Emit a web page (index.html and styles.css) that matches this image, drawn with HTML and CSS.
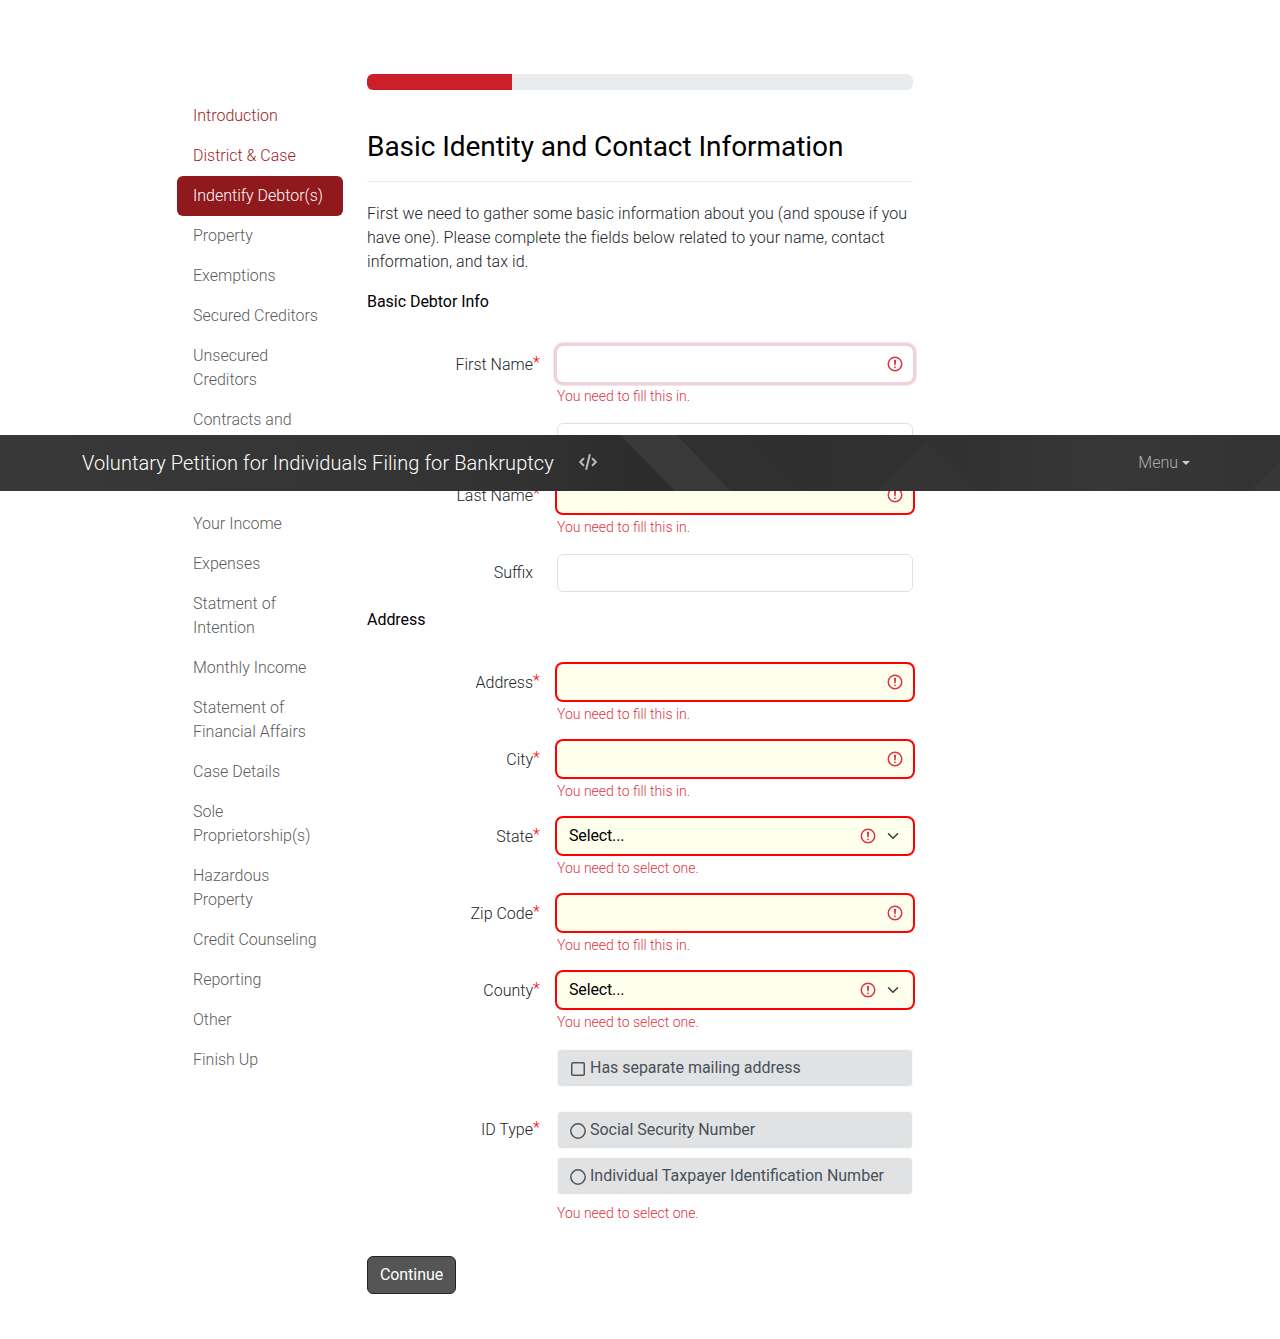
FILE: index.html
```html
<!DOCTYPE html>
<html lang="en">
<head>
<meta charset="utf-8">
<title>Voluntary Petition for Individuals Filing for Bankruptcy</title>
<link rel="stylesheet" href="styles.css">
</head>
<body>
<svg width="0" height="0" class="defs" aria-hidden="true">
  <symbol id="alert" viewBox="0 0 12 12"><g fill="none" stroke="#dc3545"><circle cx="6" cy="6" r="4.5"/><path stroke-linejoin="round" d="M5.8 3.6h.4L6 6.5z"/></g><circle cx="6" cy="8.2" r=".6" fill="#dc3545"/></symbol>
  <symbol id="chevron" viewBox="0 0 16 16"><path fill="none" stroke="#343a40" stroke-linecap="round" stroke-linejoin="round" stroke-width="2" d="m2 5 6 6 6-6"/></symbol>
</svg>

<header class="navbar">
  <svg class="navbar-art" viewBox="0 0 1280 56" preserveAspectRatio="none" aria-hidden="true">
    <defs>
      <linearGradient id="base" x1="0" x2="1" y1="0" y2="0">
        <stop offset="0" stop-color="#383838"/><stop offset=".3" stop-color="#353535"/><stop offset=".42" stop-color="#313131"/><stop offset=".5" stop-color="#2c2c2c"/><stop offset=".6" stop-color="#2f2f2f"/><stop offset=".75" stop-color="#313131"/><stop offset=".86" stop-color="#373737"/><stop offset="1" stop-color="#333"/>
      </linearGradient>
    </defs>
    <path fill="url(#base)" d="M0 0h1280v56H0z"/>
    <path fill="#393939" d="M620 0h57l54 56h-56z"/>
    <path fill="#303030" d="M677 0h70l50 56h-66z"/>
    <path fill="#343434" d="M878 56 926 7l50 49z"/>
    <path fill="#373737" d="M1248 56l32-30v30z"/>
  </svg>
  <div class="navbar-inner">
    <span class="brand">Voluntary Petition for Individuals Filing for Bankruptcy</span>
    <svg class="code" viewBox="0 0 18 16" aria-hidden="true"><path fill="none" stroke="currentColor" stroke-width="2" stroke-linecap="round" stroke-linejoin="round" d="M4.400 4.800 1.200 8l3.200 3.200M13.600 4.800 16.800 8l-3.200 3.200M10.700 1 7.300 15"/></svg>
    <a class="menu">Menu</a>
  </div>
</header>

<div class="page">
  <nav class="steps">
    <a class="done">Introduction</a>
    <a class="done">District &amp; Case</a>
    <a class="active">Indentify Debtor(s)</a>
    <a>Property</a>
    <a>Exemptions</a>
    <a>Secured Creditors</a>
    <a>Unsecured Creditors</a>
    <a>Contracts and Leases</a>
    <a>Codebtors</a>
    <a>Your Income</a>
    <a>Expenses</a>
    <a>Statment of Intention</a>
    <a>Monthly Income</a>
    <a>Statement of Financial Affairs</a>
    <a>Case Details</a>
    <a>Sole Proprietorship(s)</a>
    <a>Hazardous Property</a>
    <a>Credit Counseling</a>
    <a>Reporting</a>
    <a>Other</a>
    <a>Finish Up</a>
  </nav>
  <main>
    <div class="progress"><div class="progress-bar" style="width:26.5%"></div></div>
    <h1>Basic Identity and Contact Information</h1>
    <hr>
    <p>First we need to gather some basic information about you (and spouse if you have one). Please complete the fields below related to your name, contact information, and tax id.</p>
    <h2>Basic Debtor Info</h2>

    <div class="row">
      <label>First Name<sup>*</sup></label>
      <div><div class="field focus"><input type="text"><svg class="alert"><use href="#alert"/></svg></div><div class="error">You need to fill this in.</div></div>
    </div>
    <div class="row">
      <label>Middle Name</label>
      <div><div class="field plain"><input type="text"></div></div>
    </div>
    <div class="row">
      <label>Last Name<sup>*</sup></label>
      <div><div class="field invalid"><input type="text"><svg class="alert"><use href="#alert"/></svg></div><div class="error">You need to fill this in.</div></div>
    </div>
    <div class="row">
      <label>Suffix</label>
      <div><div class="field plain"><input type="text"></div></div>
    </div>

    <h2>Address</h2>

    <div class="row">
      <label>Address<sup>*</sup></label>
      <div><div class="field invalid"><input type="text"><svg class="alert"><use href="#alert"/></svg></div><div class="error">You need to fill this in.</div></div>
    </div>
    <div class="row">
      <label>City<sup>*</sup></label>
      <div><div class="field invalid"><input type="text"><svg class="alert"><use href="#alert"/></svg></div><div class="error">You need to fill this in.</div></div>
    </div>
    <div class="row">
      <label>State<sup>*</sup></label>
      <div><div class="field invalid"><select><option>Select...</option></select><svg class="alert"><use href="#alert"/></svg><svg class="chevron"><use href="#chevron"/></svg></div><div class="error">You need to select one.</div></div>
    </div>
    <div class="row">
      <label>Zip Code<sup>*</sup></label>
      <div><div class="field invalid"><input type="text"><svg class="alert"><use href="#alert"/></svg></div><div class="error">You need to fill this in.</div></div>
    </div>
    <div class="row">
      <label>County<sup>*</sup></label>
      <div><div class="field invalid"><select><option>Select...</option></select><svg class="alert"><use href="#alert"/></svg><svg class="chevron"><use href="#chevron"/></svg></div><div class="error">You need to select one.</div></div>
    </div>
    <div class="row mailing">
      <span></span>
      <div class="option"><svg viewBox="0 0 16 16"><rect x="1.750" y="1.750" width="12.500" height="12.500" rx="1" fill="none" stroke="#555" stroke-width="1.500"/></svg>Has separate mailing address</div>
    </div>
    <div class="row">
      <label>ID Type<sup>*</sup></label>
      <div class="options">
        <div class="option"><svg viewBox="0 0 16 16"><circle cx="8" cy="8" r="7.200" fill="none" stroke="#555" stroke-width="1.500"/></svg>Social Security Number</div>
        <div class="option"><svg viewBox="0 0 16 16"><circle cx="8" cy="8" r="7.200" fill="none" stroke="#555" stroke-width="1.500"/></svg>Individual Taxpayer Identification Number</div>
        <div class="error">You need to select one.</div>
      </div>
    </div>
    <button type="button">Continue</button>
  </main>
</div>
</body>
</html>
```
FILE: styles.css
```css
* { box-sizing: border-box; }
body {
  margin: 0;
  min-height: 1339px;
  background: #fff;
  color: #212529;
  font: 300 16px/24px Roboto, sans-serif;
}
.defs { position: absolute; }

/* The bar floats over the form */
.navbar {
  position: absolute;
  top: 435px;
  left: 0;
  width: 100%;
  height: 56px;
  z-index: 5;
  background: #343434;
}
.navbar-art { position: absolute; width: 100%; height: 100%; }
.navbar-inner {
  position: relative;
  display: flex;
  align-items: center;
  height: 56px;
  padding: 0 90px 0 82px;
  color: rgba(255, 255, 255, .6);
}
.brand { font-size: 20px; line-height: 30px; letter-spacing: .08px; color: #fff; }
.code { width: 18px; height: 16px; margin: -2px 0 0 25px; color: rgba(255, 255, 255, .68); }
.menu { display: flex; align-items: center; margin-left: auto; }
.menu::after {
  content: "";
  margin-left: 4px;
  border: solid transparent;
  border-top-color: rgba(255, 255, 255, .75);
  border-width: 4.500px 4px 0;
}

.page {
  display: grid;
  grid-template-columns: 166px 546px;
  column-gap: 24px;
  margin-left: 177px;
  padding-top: 74px;
}
.steps { display: flex; flex-direction: column; padding-top: 22px; }
.steps a { padding: 8px 16px; color: #5c5c5c; }
.steps .done { color: #a01c23; }
.steps .active { background: #8f191c; color: #fff; border-radius: 6px; }

.progress { height: 16px; border-radius: 6px; background: #e9ecef; overflow: hidden; }
.progress-bar { height: 100%; background: #cb1f2b; }
h1 { margin: 40px 0 17px; font-size: 28px; line-height: 34px; font-weight: 400; letter-spacing: -.05px; color: #000; }
hr { margin: 0 0 20px; border: 0; border-top: 1px solid #e9e9ea; }
p { margin: 0 0 16px; letter-spacing: .055px; }
h2 { margin: 0 0 32px; font-size: 16px; line-height: 24px; font-weight: 400; letter-spacing: -.04px; color: #000; }

.row { display: grid; grid-template-columns: 166px 356px; column-gap: 24px; margin-bottom: 16px; }
label { padding-top: 7px; text-align: right; white-space: nowrap; }
sup { display: inline-block; width: 0; color: #f00; font-size: 16px; line-height: 0; vertical-align: 2px; }
.field { display: flex; align-items: center; height: 36px; border-radius: 6px; }
.field input, .field select {
  flex: 1;
  min-width: 0;
  height: 100%;
  padding: 0 12px;
  border: 0;
  outline: 0;
  background: transparent;
  color: #000;
  font: 400 16px Roboto, sans-serif;
  appearance: none;
}
.field select { padding-bottom: 2px; letter-spacing: -.15px; }
.plain { height: 38px; border: 1px solid #dee2e6; }
.focus { box-shadow: 0 0 0 3px #eed2da, 0 0 0 4px #f5e5e9; }
.invalid { background: #ffffee; box-shadow: 0 0 0 2px #f00; }
.alert { width: 18px; height: 18px; margin-right: 9px; }
.alert:not(:last-child) { margin-right: 8px; }
.chevron { width: 16px; height: 12px; margin-right: 12px; }
.error { margin-top: 4px; color: #dc3545; font-size: 14px; line-height: 21px; }

.option {
  display: flex;
  align-items: center;
  height: 38px;
  padding: 0 12px;
  border: 1px solid #f8f9fa;
  border-radius: 4px;
  background: #e1e2e4;
  color: #495057;
  font-weight: 400;
  letter-spacing: -.03px;
}
.option svg { width: 16px; height: 16px; margin: 2px 4px 0 0; }
.mailing { margin-bottom: 24px; }
.options .option + .option { margin-top: 8px; letter-spacing: 0; }
.options .error { margin-top: 8px; }
button {
  display: block;
  width: 89px;
  height: 38px;
  margin-top: 32px;
  padding: 0 0 2px;
  border: 1px solid #212529;
  border-radius: 6px;
  background: #555;
  color: #fff;
  font: 400 16px Roboto, sans-serif;
  letter-spacing: -.05px;
}
```
